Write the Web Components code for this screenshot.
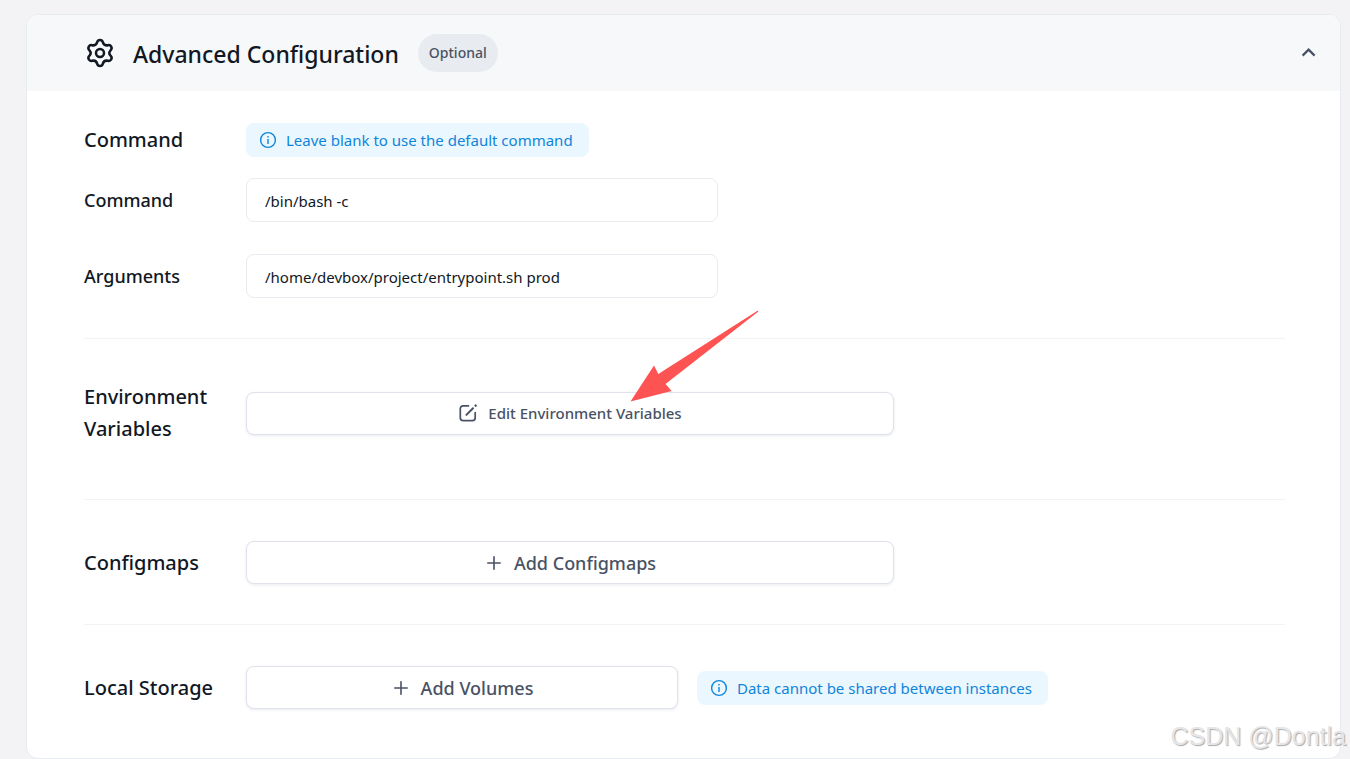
<!DOCTYPE html>
<html lang="en">
<head>
<meta charset="utf-8">
<meta name="viewport" content="width=device-width, initial-scale=1">
<title>Advanced Configuration</title>
<style>
    body {
        margin: 0;
        background: #f3f3f5;
        color: #111824;
        font-family: "Noto Sans", "Open Sans", sans-serif;
        font-size: 15px;
    }
</style>
</head>
<body>
<config-page>
    <config-card heading="Advanced Configuration" badge="Optional">
        <config-section class="stacked">
            <config-row label="Command">
                <info-tip>Leave blank to use the default command</info-tip>
            </config-row>
            <form-field label="Command" value="/bin/bash -c"></form-field>
            <form-field label="Arguments" value="/home/devbox/project/entrypoint.sh prod"></form-field>
        </config-section>
        <config-section class="roomy">
            <config-row label="Environment Variables">
                <action-button icon="edit" small>Edit Environment Variables</action-button>
                <pointer-arrow></pointer-arrow>
            </config-row>
        </config-section>
        <config-section>
            <config-row label="Configmaps">
                <action-button icon="plus">Add Configmaps</action-button>
            </config-row>
        </config-section>
        <config-section>
            <config-row label="Local Storage">
                <action-button icon="plus" narrow>Add Volumes</action-button>
                <info-tip>Data cannot be shared between instances</info-tip>
            </config-row>
        </config-section>
    </config-card>
    <page-watermark>CSDN @Dontla</page-watermark>
</config-page>

<script>
// --- Icons ---
const ICONS = {
    gear: `<svg width="30" height="30" viewBox="0 0 30 30" fill="none" stroke="currentColor" stroke-width="2.5" stroke-linejoin="round"><path d="M12.2 4.2a2.9 2.9 0 0 1 5.6 0Q18.95 8.16 22.95 7.18A2.9 2.9 0 0 1 25.75 12.02Q22.9 15 25.75 17.98A2.9 2.9 0 0 1 22.95 22.82Q18.95 21.84 17.8 25.8A2.9 2.9 0 0 1 12.2 25.8Q11.05 21.84 7.05 22.82A2.9 2.9 0 0 1 4.25 17.98Q7.1 15 4.25 12.02A2.9 2.9 0 0 1 7.05 7.18Q11.05 8.16 12.2 4.2Z"/><circle cx="15" cy="15" r="4"/></svg>`,
    info: `<svg width="18" height="18" viewBox="0 0 18 18" fill="none" stroke="currentColor" stroke-width="1.4"><circle cx="9" cy="9" r="7.4"/><path d="M9 8v5M9 5v1.6"/></svg>`,
    edit: `<svg width="20" height="20" viewBox="0 0 20 20" fill="none" stroke="currentColor" stroke-width="1.7" stroke-linecap="round" stroke-linejoin="round"><path d="M10.5 2.8H5.2A2.9 2.9 0 0 0 2.3 5.7v9.1a2.9 2.9 0 0 0 2.9 2.9h9.1a2.9 2.9 0 0 0 2.9-2.9V9.5"/><path stroke-width="2" d="M8.4 11.9 15 5.3"/><path stroke-width="2.4" d="m17.6 2.7.1-.1"/></svg>`,
    plus: `<svg width="20" height="20" viewBox="0 0 20 20" fill="none" stroke="currentColor" stroke-width="1.6" stroke-linecap="round"><path d="M10 3.8v12.4M3.8 10h12.4"/></svg>`,
    chevron: `<svg width="20" height="20" viewBox="0 0 20 20" fill="none" stroke="currentColor" stroke-width="2.2"><path d="m4.6 12.6 6-6 6 6"/></svg>`,
};

// --- Page ---
class ConfigPage extends HTMLElement {
    constructor() {
        super();
        this.attachShadow({mode: 'open'}).innerHTML = `
            <style>
                :host {
                    display: block;
                    position: relative;
                    box-sizing: border-box;
                    min-height: 100vh;
                    padding: 14px 9px 0 26px;
                }
            </style>
            <slot></slot>`;
    }
}
customElements.define('config-page', ConfigPage);

// --- Card with a collapsible body ---
class ConfigCard extends HTMLElement {
    constructor() {
        super();
        this.attachShadow({mode: 'open'});
    }
    connectedCallback() {
        this.shadowRoot.innerHTML = `
            <style>
                :host {
                    display: block;
                    border: 1px solid #e8ebf0;
                    border-radius: 12px;
                    background: #fff;
                    overflow: hidden;
                }
                header {
                    display: flex;
                    align-items: center;
                    height: 76px;
                    padding: 0 22px 0 58px;
                    background: #f6f8fa;
                }
                svg { display: block; }
                h1 {
                    margin: 0 19px 0 18px;
                    padding-top: 2px;
                    font-size: 23px;
                    font-weight: 500;
                    line-height: 32px;
                }
                .badge {
                    padding: 8px 11px;
                    border-radius: 20px;
                    background: #e8ebf0;
                    color: #485264;
                    font-size: 14px;
                    font-weight: 500;
                    line-height: 22px;
                }
                button {
                    margin-left: auto;
                    padding: 0;
                    border: 0;
                    background: none;
                    color: #485264;
                    cursor: pointer;
                }
                .body { padding: 0 55px 0 57px; }
                .body[hidden] { display: none; }
            </style>
            <header>
                ${ICONS.gear}
                <h1>${this.getAttribute('heading')}</h1>
                <span class="badge">${this.getAttribute('badge')}</span>
                <button type="button" aria-label="Toggle section" aria-expanded="true">${ICONS.chevron}</button>
            </header>
            <div class="body"><slot></slot></div>`;
        const btn = this.shadowRoot.querySelector('button');
        const body = this.shadowRoot.querySelector('.body');
        btn.onclick = () => {
            body.hidden = !body.hidden;
            btn.setAttribute('aria-expanded', String(!body.hidden));
        };
    }
}
customElements.define('config-card', ConfigCard);

// --- Section, separated from the next one by a line ---
class ConfigSection extends HTMLElement {
    constructor() {
        super();
        this.attachShadow({mode: 'open'}).innerHTML = `
            <style>
                :host {
                    display: flex;
                    flex-direction: column;
                    padding: 41px 0 40px;
                    border-bottom: 1px solid #f1f3f6;
                }
                :host(:last-of-type) { border-bottom: 0; padding-bottom: 49px; }
                :host(.stacked) { gap: 32px; padding-top: 32px; }
                :host(.roomy) { padding-top: 42px; padding-bottom: 54px; }
                :host(.stacked) ::slotted(config-row) { margin-bottom: -11px; }
            </style>
            <slot></slot>`;
    }
}
customElements.define('config-section', ConfigSection);

class ConfigRow extends HTMLElement {
    constructor() {
        super();
        this.attachShadow({mode: 'open'});
    }
    connectedCallback() {
        this.shadowRoot.innerHTML = `
            <style>
                :host { display: flex; align-items: center; }
                h2 {
                    flex: none;
                    width: 162px;
                    margin: 0;
                    font-size: 20px;
                    font-weight: 500;
                    line-height: 32px;
                }
                .content {
                    display: flex;
                    flex: 1;
                    align-items: center;
                    gap: 19px;
                    position: relative;
                }
            </style>
            <h2>${this.getAttribute('label')}</h2>
            <div class="content"><slot></slot></div>`;
    }
}
customElements.define('config-row', ConfigRow);

// --- Labelled text input ---
class FormField extends HTMLElement {
    constructor() {
        super();
        this.attachShadow({mode: 'open'});
    }
    connectedCallback() {
        this.shadowRoot.innerHTML = `
            <style>
                :host { display: flex; align-items: center; }
                label {
                    flex: none;
                    width: 162px;
                    font-size: 18px;
                    font-weight: 500;
                    line-height: 24px;
                }
                input {
                    box-sizing: border-box;
                    width: 100%;
                    max-width: 472px;
                    height: 44px;
                    padding: 2px 18px 0;
                    border: 1px solid #e8ebf0;
                    border-radius: 8px;
                    background: #fff;
                    color: #111824;
                    font: inherit;
                    outline: none;
                }
                input:focus { border-color: #219bf4; }
            </style>
            <label for="field">${this.getAttribute('label')}</label>
            <input id="field" type="text">`;
        this.shadowRoot.querySelector('input').value = this.getAttribute('value') || '';
    }
}
customElements.define('form-field', FormField);

class ActionButton extends HTMLElement {
    constructor() {
        super();
        this.attachShadow({mode: 'open'});
    }
    connectedCallback() {
        this.shadowRoot.innerHTML = `
            <style>
                :host { display: block; width: 100%; max-width: 648px; }
                :host([narrow]) { max-width: 432px; }
                button {
                    display: flex;
                    align-items: center;
                    justify-content: center;
                    gap: 10px;
                    box-sizing: border-box;
                    width: 100%;
                    height: 43px;
                    border: 1px solid #dfe2ea;
                    border-radius: 8px;
                    background: #fff;
                    box-shadow: 0 1px 3px rgba(19, 51, 107, .1);
                    color: #485264;
                    font-family: inherit;
                    font-size: 18px;
                    font-weight: 500;
                    cursor: pointer;
                }
                :host([small]) button { font-size: 15px; }
                button:hover { background: #f9fafc; }
            </style>
            <button type="button">${ICONS[this.getAttribute('icon')]}<span><slot></slot></span></button>`;
    }
}
customElements.define('action-button', ActionButton);

class InfoTip extends HTMLElement {
    constructor() {
        super();
        this.attachShadow({mode: 'open'}).innerHTML = `
            <style>
                :host {
                    display: flex;
                    align-items: center;
                    gap: 9px;
                    flex: none;
                    padding: 5px 16px 5px 13px;
                    border-radius: 8px;
                    background: #ebf7fe;
                    color: #0e85db;
                    line-height: 24px;
                }
                svg { display: block; }
            </style>
            ${ICONS.info}<span><slot></slot></span>`;
    }
}
customElements.define('info-tip', InfoTip);

// --- Red arrow lying over the button ---
class PointerArrow extends HTMLElement {
    constructor() {
        super();
        this.attachShadow({mode: 'open'}).innerHTML = `
            <style>
                :host {
                    position: absolute;
                    left: 384px;
                    bottom: 33px;
                    pointer-events: none;
                }
                svg { display: block; }
            </style>
            <svg width="130" height="93" viewBox="0 0 130 93" fill="#fd5352"><path d="M.5 92.5 24 56.5l4.3 8.5L127.5 1.7c.7-.3 1.1.5.6 1L35.5 75l6.2 7Z"/></svg>`;
    }
}
customElements.define('pointer-arrow', PointerArrow);

class PageWatermark extends HTMLElement {
    constructor() {
        super();
        this.attachShadow({mode: 'open'}).innerHTML = `
            <style>
                :host {
                    position: absolute;
                    right: 4px;
                    bottom: 8px;
                    color: #e6e6e8;
                    font-family: "Liberation Sans", sans-serif;
                    font-size: 25px;
                    line-height: 30px;
                    text-shadow: 1px 1px 1px #aaa;
                    white-space: nowrap;
                    pointer-events: none;
                }
            </style>
            <slot></slot>`;
    }
}
customElements.define('page-watermark', PageWatermark);
</script>
</body>
</html>
